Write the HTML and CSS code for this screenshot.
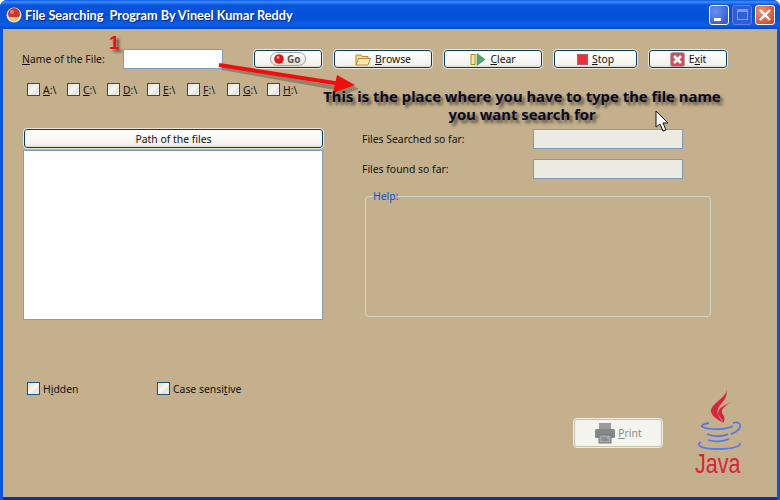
FILE: index.html
```html
<!DOCTYPE html>
<html lang="en">
<head>
    <meta charset="UTF-8">
    <title>File Searching Program</title>
    <link rel="stylesheet" href="styles.css">
</head>
<body>
    <div class="window">
        <div class="titlebar">
            <svg class="appicon" width="16" height="16" viewBox="0 0 16 16">
                <circle cx="8" cy="8" r="7.5" fill="#f3e4dc"/>
                <circle cx="8" cy="7" r="6" fill="#c8392f"/>
                <path d="M3 10h10l-2 4H5z" fill="#e8c86a"/>
                <circle cx="6" cy="5" r="2" fill="#e8806a"/>
            </svg>
            <span class="title">File Searching&nbsp; Program By Vineel Kumar Reddy</span>
            <div class="winbtns">
                <span class="winbtn min"><i></i></span>
                <span class="winbtn max"><i></i></span>
                <span class="winbtn close">
                    <svg width="14" height="14" viewBox="0 0 14 14"><path d="M2 2l10 10M12 2L2 12" stroke="#fff" stroke-width="2.4"/></svg>
                </span>
            </div>
        </div>

        <div class="client">
            <div class="toprow">
                <label class="namelabel"><u>N</u>ame of the File:</label>
                <div class="field white nameinput"></div>
                <div class="btn go">
                    <span class="gopill"><svg width="10" height="10" viewBox="0 0 10 10"><circle cx="5" cy="5" r="4.8" fill="#e0161a"/><circle cx="4" cy="3.5" r="1.4" fill="#ff9a90"/></svg><b>Go</b></span>
                </div>
                <div class="btn browse">
                    <svg width="16" height="13" viewBox="0 0 16 13"><path d="M1 12V2h5l1 1.500h6V6" fill="#f6dc9c" stroke="#b98a34"/><path d="M1 12l2.500-6.500h12L13 12z" fill="#fbe8b4" stroke="#b98a34"/></svg>
                    <span><u>B</u>rowse</span>
                </div>
                <div class="btn clear">
                    <svg width="16" height="13" viewBox="0 0 16 13"><rect x="1" y="1.500" width="4" height="10" fill="#f4e6a8" stroke="#b08a1c"/><path d="M7 0.500l8 6-8 6z" fill="#4aa86c" stroke="#3f8a64" stroke-width="0.600"/></svg>
                    <span><u>C</u>lear</span>
                </div>
                <div class="btn stop">
                    <svg width="11" height="11" viewBox="0 0 11 11"><rect x="0.500" y="0.500" width="10" height="10" fill="#e8303c" stroke="#b0606a"/></svg>
                    <span><u>S</u>top</span>
                </div>
                <div class="btn exit">
                    <svg width="15" height="15" viewBox="0 0 15 15"><rect x="0.500" y="0.500" width="14" height="14" rx="2" fill="#d84a56" stroke="#b8a0a8"/><path d="M4 4l7 7M11 4l-7 7" stroke="#fff" stroke-width="2.800"/></svg>
                    <span>E<u>x</u>it</span>
                </div>
            </div>

            <div class="drives">
                <label class="check"><i></i><span><u>A</u>:\</span></label>
                <label class="check"><i></i><span><u>C</u>:\</span></label>
                <label class="check"><i></i><span><u>D</u>:\</span></label>
                <label class="check"><i></i><span><u>E</u>:\</span></label>
                <label class="check"><i></i><span><u>F</u>:\</span></label>
                <label class="check"><i></i><span><u>G</u>:\</span></label>
                <label class="check"><i></i><span><u>H</u>:\</span></label>
            </div>

            <div class="middle">
                <div class="leftcol">
                    <div class="btn pathbtn">Path of the files</div>
                    <div class="field white pathlist"></div>
                </div>
                <div class="rightcol">
                    <div class="statrow"><span>Files Searched so far:</span><div class="field stat"></div></div>
                    <div class="statrow"><span>Files found so far:</span><div class="field stat"></div></div>
                    <fieldset class="help"><legend>Help:</legend></fieldset>
                </div>
            </div>

            <div class="bottom">
                <div class="options">
                    <label class="check hidden"><i></i><span>H<u>i</u>dden</span></label>
                    <label class="check"><i></i><span>Case sensi<u>t</u>ive</span></label>
                </div>
                <div class="btn print">
                    <svg width="22" height="22" viewBox="0 0 22 22"><rect x="5" y="1" width="12" height="7" fill="#9a9a9a"/><rect x="1" y="7" width="20" height="9" rx="1.500" fill="#84868a"/><rect x="5" y="13" width="12" height="8" fill="#a8a8a8" stroke="#77797c"/><path d="M7 16h6M7 18h8" stroke="#77797c"/></svg>
                    <span><u>P</u>rint</span>
                </div>
                <svg class="javalogo" width="48" height="90" viewBox="0 0 48 90">
                    <path d="M31 0C33 8 18 13 16 21C15 26 22 30 28 34C25 29 21 25 23 20C25 14 34 10 31 0z" fill="#d8233c"/>
                    <path d="M36 13C30 16 23 19 23 24C23 27 27 29 28 34C31 30 29 27 27 24C26 20 30 17 36 13z" fill="#d8233c"/>
                    <g fill="none" stroke="#5a78e0" stroke-width="1.800">
                        <path d="M14 34C8 35 5 37 8 38C14 41 32 41 38 37"/>
                        <path d="M38 34C44 32 47 36 44 40C42 43 38 44 36 45"/>
                        <path d="M12 45C18 48 28 48 33 45"/>
                        <path d="M13 51C18 53 28 53 34 50"/>
                        <path d="M6 53C0 56 6 60 22 60C36 60 46 58 45 54"/>
                    </g>
                    <text class="javatext" transform="translate(0 84) scale(1 1.250)">Java</text>
                </svg>
            </div>
        </div>

        <!-- annotations drawn over the screenshot -->
        <span class="note-num">1</span>
        <svg class="note-arrow" width="780" height="140" viewBox="0 0 780 140">
            <g fill="#3b3226" stroke="#3b3226" opacity="0.35">
                <path d="M222 68l120 21" stroke-width="4"/>
                <path d="M340 79l18 10-22 8z"/>
            </g>
            <path d="M219 65l122 19" stroke="#f20d0d" stroke-width="4" fill="none"/>
            <path d="M337 75l18 10-22 8z" fill="#f20d0d"/>
            <path d="M656 111v16l4-3 3 7 3-1-3-7h5z" fill="#fff" stroke="#111"/>
        </svg>
        <div class="note-text">This is the place where you have to type the file name<br>you want search for</div>
    </div>
</body>
</html>
```

FILE: styles.css
```css
* {box-sizing: border-box;}
body {
    margin: 0;
    font-family: "Noto Sans", "DejaVu Sans", sans-serif;
    font-size: 10.4px;
    color: #111;
}
.window {
    width: 780px;
    height: 500px;
    position: relative;
    display: flex;
    flex-direction: column;
    background: #0855dd;
    border-radius: 7px 7px 0 0;
    overflow: hidden;
}

/* title bar */
.titlebar {
    height: 29px;
    flex: none;
    display: flex;
    align-items: center;
    padding: 0 5px 0 6px;
    background: linear-gradient(#0a5ae6 0, #3d8df5 2px, #0853dc 5px, #0450d8 18px, #0a5fe8 25px, #0346c4 29px);
}
.appicon {margin-right: 3px;}
.title {
    color: #fff;
    font-family: "Lato", "Noto Sans", sans-serif;
    font-weight: bold;
    font-size: 12.700px;
    white-space: nowrap;
    text-shadow: 1px 1px 0 #0a2a80;
}
.winbtns {
    margin-left: auto;
    display: flex;
    gap: 3px;
}
.winbtn {
    width: 20px;
    height: 20px;
    border: 1px solid #fff;
    border-radius: 3px;
    display: flex;
    align-items: center;
    justify-content: center;
    background: radial-gradient(circle at 30% 30%, #6a90ee, #2a50d0);
    position: relative;
}
.winbtn.min i {
    position: absolute;
    left: 4px;
    bottom: 3px;
    width: 7px;
    height: 3px;
    background: #fff;
}
.winbtn.max {
    border-color: #6080e8;
    background: #2f5fd8;
}
.winbtn.max i {
    width: 11px;
    height: 11px;
    border: 1px solid #7a9cf0;
    border-top-width: 3px;
}
.winbtn.close {
    background: radial-gradient(circle at 30% 30%, #f09070, #d03c18);
}

/* client area */
.client {
    flex: 1;
    margin: 0 3px;
    background: #c4b08c;
    border-bottom: 3px solid #0a2fb0;
    display: flex;
    flex-direction: column;
    padding: 20px 0 0 19px;
}
.toprow {
    display: flex;
    align-items: center;
    height: 20px;
}
.namelabel {width: 101px;}
.nameinput {
    width: 100px;
    height: 20px;
    margin-right: 31px;
}
.field {
    border: 1px solid #7f9db9;
    background: #ebeae3;
}
.field.white {background: #fff;}
.btn {
    display: flex;
    align-items: center;
    justify-content: center;
    gap: 4px;
    height: 18px;
    border: 1px solid #003c74;
    border-radius: 3px;
    background: linear-gradient(#fff, #f3f2ec 85%, #dcd8cc);
    outline: 1px solid #ece6d6;
}
.go {width: 68px; margin-right: 12px;}
.browse {width: 98px; margin-right: 12px;}
.clear {width: 98px; margin-right: 12px;}
.stop {width: 83px; margin-right: 12px;}
.exit {width: 78px;}
.gopill {
    display: flex;
    align-items: center;
    gap: 3px;
    height: 14px;
    width: 36px;
    padding-left: 3px;
    border: 1px solid #a8a49c;
    border-radius: 7px;
    background: linear-gradient(#fff, #e4e0d8);
}
.gopill b {
    color: #555;
    font-size: 10px;
}

.drives {
    display: flex;
    margin: 14px 0 0 5px;
}
.check {
    display: flex;
    align-items: center;
    gap: 3px;
    width: 40px;
    height: 13px;
    white-space: nowrap;
}
.check i {
    width: 13px;
    height: 13px;
    flex: none;
    border: 1px solid #1c5180;
    background: linear-gradient(135deg, #dcdcd2, #f8f8f4 50%, #e4e4dc 70%, #f6f6f0);
}

.middle {
    display: flex;
    margin-top: 33px;
}
.leftcol {
    width: 300px;
    margin-left: 1px;
    display: flex;
    flex-direction: column;
}
.pathbtn {
    width: 299px;
    height: 19px;
    margin-left: 1px;
    flex: none;
}
.pathlist {
    width: 300px;
    height: 170px;
    margin-top: 2px;
}
.rightcol {
    margin-left: 39px;
    display: flex;
    flex-direction: column;
    gap: 10px;
}
.statrow {
    display: flex;
    align-items: center;
    width: 321px;
}
.statrow span {width: 171px;}
.stat {width: 150px; height: 20px;}
.help {
    width: 346px;
    height: 127px;
    margin: 1px 0 0 3px;
    padding: 0;
    border: 1px solid #d3d6c6;
    border-radius: 4px;
}
.help legend {
    color: #0a50e0;
    padding: 0;
    margin-left: 7px;
    line-height: 12px;
}

.bottom {
    display: flex;
    align-items: flex-start;
    margin-top: 62px;
    margin-left: 5px;
}
.options {display: flex; width: 547px;}
.hidden {width: 130px;}
.print {
    width: 88px;
    height: 28px;
    margin-top: 37px;
    color: #888;
    background: #f4f4ee;
    border: 1px solid #c6c2b0;
    outline: 1px solid #f0ece0;
    gap: 2px;
}
.javalogo {
    margin: 7px 0 0 33px;
    flex: none;
}
.javatext {
    fill: #d8233c;
    font-family: "Liberation Sans", sans-serif;
    font-size: 21.500px;
}

/* annotations */
.note-num {
    position: absolute;
    left: 109px;
    top: 32px;
    color: #e81010;
    font: bold 19px "Liberation Sans", sans-serif;
    text-shadow: 3px 3px 3px #5a5040;
}
.note-arrow {
    position: absolute;
    left: 0;
    top: 0;
}
.note-text {
    position: absolute;
    left: 301px;
    top: 87px;
    width: 442px;
    text-align: center;
    color: #0a0a20;
    font: bold 14.850px/18px "Noto Sans", sans-serif;
    white-space: nowrap;
    text-shadow: 3px 3px 3px #5a5040;
}
```
